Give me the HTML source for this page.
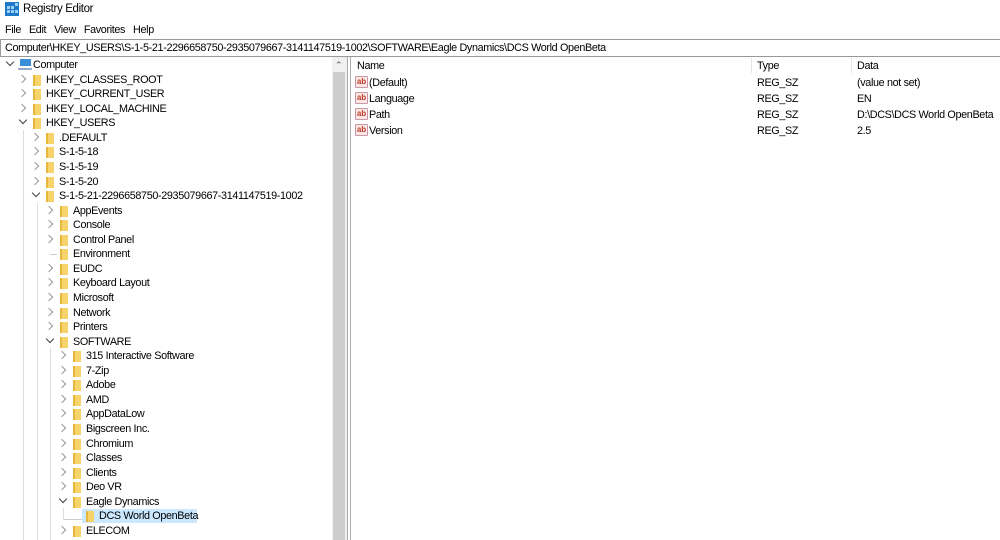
<!DOCTYPE html>
<html><head><meta charset="utf-8"><style>
*{margin:0;padding:0;box-sizing:border-box}
body{width:1000px;height:540px;background:#fff;font-family:"Liberation Sans",sans-serif;font-size:10.8px;letter-spacing:-0.35px;color:#000;position:relative;overflow:hidden}
.abs{position:absolute;white-space:nowrap}
.row{position:absolute;height:14.56px;line-height:14.56px;white-space:nowrap;padding-top:1px}
.fold{position:absolute;top:3px;width:8px;height:11px;background:#f7d46b;border-left:2px solid #e6b73c}
.chev{position:absolute;top:4px;width:6px;height:6px;border-right:1px solid #999;border-bottom:1px solid #999}
.r{transform:rotate(-45deg)}
.d{transform:rotate(45deg);top:2px;border-color:#444}
.vl{position:absolute;width:1px;background:#ddd}
.ab{position:absolute;left:355px;width:13px;height:12px;background:#fbe8e6;border:1px solid #c9a;border-radius:1px;font-size:8px;font-weight:bold;color:#c0392b;line-height:10px;text-align:center;letter-spacing:0}
</style></head><body>
<svg class="abs" style="left:5px;top:2px" width="14" height="14"><rect x="0" y="0" width="14" height="14" fill="#1e79c9"/><g fill="#9fd0f5"><rect x="2" y="4" width="3" height="3"/><rect x="6" y="4" width="3" height="3"/><rect x="2" y="8" width="3" height="3"/><rect x="6" y="8" width="3" height="3"/><rect x="10" y="8" width="3" height="3"/><rect x="10" y="1" width="3" height="3"/></g></svg>
<div class="abs" style="left:23px;top:3px;font-size:11.5px">Registry Editor</div>
<div class="abs" style="left:5px;top:24px">File&nbsp;&nbsp;&nbsp;Edit&nbsp;&nbsp;&nbsp;View&nbsp;&nbsp;&nbsp;Favorites&nbsp;&nbsp;&nbsp;Help</div>
<div class="abs" style="left:0;top:39px;width:1000px;height:18px;border:1px solid #999;border-right:none;padding-left:4px;line-height:16px">Computer\HKEY_USERS\S-1-5-21-2296658750-2935079667-3141147519-1002\SOFTWARE\Eagle Dynamics\DCS World OpenBeta</div>
<div class="abs" style="left:332px;top:57px;width:15px;height:483px;background:#f0f0f0"></div>
<div class="abs" style="left:333px;top:72px;width:12px;height:468px;background:#cdcdcd"></div>
<div class="abs" style="left:335px;top:60px;font-size:9px;color:#555">&#8963;</div>
<div class="abs" style="left:347px;top:57px;width:1px;height:483px;background:#aaa"></div>
<div class="abs" style="left:350px;top:57px;width:1px;height:483px;background:#aaa"></div>
<div class="vl" style="left:23px;top:130px;height:410px"></div>
<div class="vl" style="left:37px;top:203px;height:337px"></div>
<div class="vl" style="left:50px;top:348px;height:192px"></div>
<div class="vl" style="left:63px;top:508px;height:12px"></div>
<div class="abs" style="left:50px;top:254px;width:7px;height:1px;background:#ccc"></div>
<div class="abs" style="left:64px;top:519px;width:18px;height:1px;background:#ccc"></div>
<div class="row" style="top:57px;left:0"><span class="chev d" style="left:7px"></span><svg class="abs" style="left:18px;top:1px" width="14" height="12"><rect x="2" y="1" width="11" height="7" fill="#3b8fd8"/><path d="M0 11h14" stroke="#9ac" stroke-width="2"/></svg><span class="abs" style="left:33px">Computer</span></div>
<div class="row" style="top:71.6px"><span class="chev r" style="left:19px"></span><span class="fold" style="left:33px"></span><span class="abs" style="left:46px">HKEY_CLASSES_ROOT</span></div>
<div class="row" style="top:86.1px"><span class="chev r" style="left:19px"></span><span class="fold" style="left:33px"></span><span class="abs" style="left:46px">HKEY_CURRENT_USER</span></div>
<div class="row" style="top:100.7px"><span class="chev r" style="left:19px"></span><span class="fold" style="left:33px"></span><span class="abs" style="left:46px">HKEY_LOCAL_MACHINE</span></div>
<div class="row" style="top:115.2px"><span class="chev d" style="left:20px"></span><span class="fold" style="left:33px"></span><span class="abs" style="left:46px">HKEY_USERS</span></div>
<div class="row" style="top:129.8px"><span class="chev r" style="left:32px"></span><span class="fold" style="left:46px"></span><span class="abs" style="left:59px">.DEFAULT</span></div>
<div class="row" style="top:144.4px"><span class="chev r" style="left:32px"></span><span class="fold" style="left:46px"></span><span class="abs" style="left:59px">S-1-5-18</span></div>
<div class="row" style="top:158.9px"><span class="chev r" style="left:32px"></span><span class="fold" style="left:46px"></span><span class="abs" style="left:59px">S-1-5-19</span></div>
<div class="row" style="top:173.5px"><span class="chev r" style="left:32px"></span><span class="fold" style="left:46px"></span><span class="abs" style="left:59px">S-1-5-20</span></div>
<div class="row" style="top:188px"><span class="chev d" style="left:33px"></span><span class="fold" style="left:46px"></span><span class="abs" style="left:59px">S-1-5-21-2296658750-2935079667-3141147519-1002</span></div>
<div class="row" style="top:202.6px"><span class="chev r" style="left:46px"></span><span class="fold" style="left:60px"></span><span class="abs" style="left:73px">AppEvents</span></div>
<div class="row" style="top:217.2px"><span class="chev r" style="left:46px"></span><span class="fold" style="left:60px"></span><span class="abs" style="left:73px">Console</span></div>
<div class="row" style="top:231.7px"><span class="chev r" style="left:46px"></span><span class="fold" style="left:60px"></span><span class="abs" style="left:73px">Control Panel</span></div>
<div class="row" style="top:246.3px"><span class="fold" style="left:60px"></span><span class="abs" style="left:73px">Environment</span></div>
<div class="row" style="top:260.8px"><span class="chev r" style="left:46px"></span><span class="fold" style="left:60px"></span><span class="abs" style="left:73px">EUDC</span></div>
<div class="row" style="top:275.4px"><span class="chev r" style="left:46px"></span><span class="fold" style="left:60px"></span><span class="abs" style="left:73px">Keyboard Layout</span></div>
<div class="row" style="top:290px"><span class="chev r" style="left:46px"></span><span class="fold" style="left:60px"></span><span class="abs" style="left:73px">Microsoft</span></div>
<div class="row" style="top:304.5px"><span class="chev r" style="left:46px"></span><span class="fold" style="left:60px"></span><span class="abs" style="left:73px">Network</span></div>
<div class="row" style="top:319.1px"><span class="chev r" style="left:46px"></span><span class="fold" style="left:60px"></span><span class="abs" style="left:73px">Printers</span></div>
<div class="row" style="top:333.6px"><span class="chev d" style="left:47px"></span><span class="fold" style="left:60px"></span><span class="abs" style="left:73px">SOFTWARE</span></div>
<div class="row" style="top:348.2px"><span class="chev r" style="left:59px"></span><span class="fold" style="left:73px"></span><span class="abs" style="left:86px">315 Interactive Software</span></div>
<div class="row" style="top:362.8px"><span class="chev r" style="left:59px"></span><span class="fold" style="left:73px"></span><span class="abs" style="left:86px">7-Zip</span></div>
<div class="row" style="top:377.3px"><span class="chev r" style="left:59px"></span><span class="fold" style="left:73px"></span><span class="abs" style="left:86px">Adobe</span></div>
<div class="row" style="top:391.9px"><span class="chev r" style="left:59px"></span><span class="fold" style="left:73px"></span><span class="abs" style="left:86px">AMD</span></div>
<div class="row" style="top:406.4px"><span class="chev r" style="left:59px"></span><span class="fold" style="left:73px"></span><span class="abs" style="left:86px">AppDataLow</span></div>
<div class="row" style="top:421px"><span class="chev r" style="left:59px"></span><span class="fold" style="left:73px"></span><span class="abs" style="left:86px">Bigscreen Inc.</span></div>
<div class="row" style="top:435.6px"><span class="chev r" style="left:59px"></span><span class="fold" style="left:73px"></span><span class="abs" style="left:86px">Chromium</span></div>
<div class="row" style="top:450.1px"><span class="chev r" style="left:59px"></span><span class="fold" style="left:73px"></span><span class="abs" style="left:86px">Classes</span></div>
<div class="row" style="top:464.7px"><span class="chev r" style="left:59px"></span><span class="fold" style="left:73px"></span><span class="abs" style="left:86px">Clients</span></div>
<div class="row" style="top:479.2px"><span class="chev r" style="left:59px"></span><span class="fold" style="left:73px"></span><span class="abs" style="left:86px">Deo VR</span></div>
<div class="row" style="top:493.8px"><span class="chev d" style="left:60px"></span><span class="fold" style="left:73px"></span><span class="abs" style="left:86px">Eagle Dynamics</span></div>
<div class="abs" style="left:82px;top:509px;width:115px;height:14px;background:#cce8ff"></div>
<div class="row" style="top:508.4px"><span class="fold" style="left:86px"></span><span class="abs" style="left:99px">DCS World OpenBeta</span></div>
<div class="row" style="top:522.9px"><span class="chev r" style="left:59px"></span><span class="fold" style="left:73px"></span><span class="abs" style="left:86px">ELECOM</span></div>
<div class="abs" style="left:751px;top:58px;width:1px;height:15px;background:#e5e5e5"></div>
<div class="abs" style="left:851px;top:58px;width:1px;height:15px;background:#e5e5e5"></div>
<div class="abs" style="left:357px;top:60px">Name</div>
<div class="abs" style="left:757px;top:60px">Type</div>
<div class="abs" style="left:857px;top:60px">Data</div>
<div class="ab" style="top:76px">ab</div><div class="abs" style="left:369px;top:77px">(Default)</div><div class="abs" style="left:757px;top:77px">REG_SZ</div><div class="abs" style="left:857px;top:77px">(value not set)</div>
<div class="ab" style="top:92px">ab</div><div class="abs" style="left:369px;top:93px">Language</div><div class="abs" style="left:757px;top:93px">REG_SZ</div><div class="abs" style="left:857px;top:93px">EN</div>
<div class="ab" style="top:108px">ab</div><div class="abs" style="left:369px;top:109px">Path</div><div class="abs" style="left:757px;top:109px">REG_SZ</div><div class="abs" style="left:857px;top:109px">D:\DCS\DCS World OpenBeta</div>
<div class="ab" style="top:124px">ab</div><div class="abs" style="left:369px;top:125px">Version</div><div class="abs" style="left:757px;top:125px">REG_SZ</div><div class="abs" style="left:857px;top:125px">2.5</div>
</body></html>
